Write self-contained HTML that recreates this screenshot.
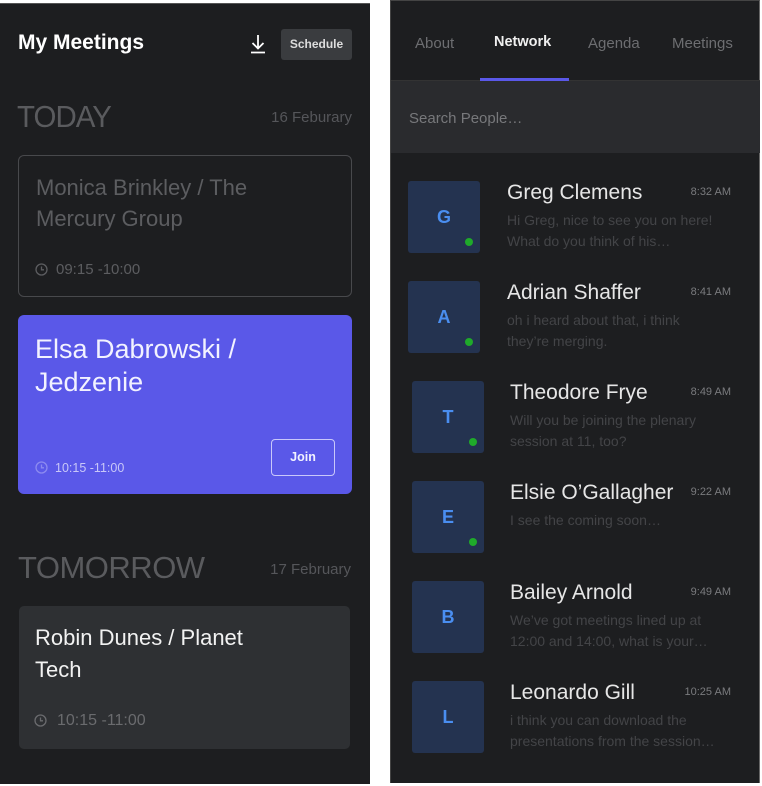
<!DOCTYPE html><html><head><style>
*{margin:0;padding:0;box-sizing:border-box}
body{width:762px;height:786px;background:#fff;font-family:"Liberation Sans",sans-serif;position:relative;overflow:hidden}
.p{position:absolute;background:#1d1e20}
.a{position:absolute;white-space:nowrap}
.av{position:absolute;width:72px;height:72px;background:#243350;border-radius:3px;color:#4a8ef0;font-size:18px;font-weight:bold;text-align:center;line-height:72px}
.dot{position:absolute;width:8px;height:8px;border-radius:50%;background:#1faa2a;right:7px;bottom:7px}
.nm{position:absolute;font-size:21px;color:#e6e6e6;white-space:nowrap}
.tm{position:absolute;font-size:11px;color:#7a7b7e;right:31px;white-space:nowrap}
.ms{position:absolute;font-size:14px;color:#434447;line-height:21px;white-space:nowrap}
</style></head><body>
<div class="p" style="left:0;top:3px;width:370px;height:781px;border-top:1px solid #555">
</div>
<div class="a" style="left:18px;top:31px;font-size:21px;font-weight:bold;color:#fff">My Meetings</div>
<svg class="a" style="left:249px;top:34px" width="18" height="20" viewBox="0 0 18 20"><path d="M9 1v13M3.5 9l5.5 5.5 5.5-5.5M2 18.5h14" stroke="#fff" stroke-width="1.8" fill="none"/></svg>
<div class="a" style="left:281px;top:29px;width:71px;height:31px;background:#3a3c3f;border-radius:3px;color:#ddd;font-size:12px;font-weight:bold;text-align:center;line-height:31px">Schedule</div>
<div class="a" style="left:17px;top:99px;font-size:31px;color:#5a5b5e;letter-spacing:-1px;transform:scaleX(.95);transform-origin:left">TODAY</div>
<div class="a" style="right:410px;top:109px;font-size:15px;color:#55565a">16 Feburary</div>
<div class="a" style="left:18px;top:155px;width:334px;height:142px;border:1.5px solid #48494c;border-radius:6px"></div>
<div class="a" style="left:36px;top:172px;font-size:22px;color:#5c5d60;line-height:31px">Monica Brinkley / The<br>Mercury Group</div>
<svg class="a" style="left:35px;top:263px" width="13" height="13"><circle cx="6.5" cy="6.5" r="5.5" stroke="#5c5d60" stroke-width="1.3" fill="none"/><path d="M6.5 3.5v3.3h2.5" stroke="#5c5d60" stroke-width="1.3" fill="none"/></svg>
<div class="a" style="left:56px;top:261px;font-size:15px;color:#5c5d60">09:15 -10:00</div>
<div class="a" style="left:18px;top:315px;width:334px;height:179px;background:#5a58e8;border-radius:6px"></div>
<div class="a" style="left:35px;top:333px;font-size:27px;color:#f2f2ff;line-height:33px">Elsa Dabrowski /<br>Jedzenie</div>
<svg class="a" style="left:35px;top:461px" width="13" height="13"><circle cx="6.5" cy="6.5" r="5.5" stroke="#8c8af0" stroke-width="1.3" fill="none"/><path d="M6.5 3.5v3.3h2.5" stroke="#8c8af0" stroke-width="1.3" fill="none"/></svg>
<div class="a" style="left:55px;top:461px;font-size:12.5px;color:#c8c7f8">10:15 -11:00</div>
<div class="a" style="left:271px;top:439px;width:64px;height:37px;border:1.5px solid #c9c8fa;border-radius:4px;color:#f2f2ff;font-size:12.5px;font-weight:bold;text-align:center;line-height:34px">Join</div>
<div class="a" style="left:18px;top:550px;font-size:31px;color:#5a5b5e;letter-spacing:-0.5px">TOMORROW</div>
<div class="a" style="right:411px;top:561px;font-size:15px;color:#55565a">17 February</div>
<div class="a" style="left:19px;top:606px;width:331px;height:143px;background:#2e3033;border-radius:5px"></div>
<div class="a" style="left:35px;top:622px;font-size:22px;color:#f2f2f2;line-height:32px">Robin Dunes / Planet<br>Tech</div>
<svg class="a" style="left:34px;top:714px" width="13" height="13"><circle cx="6.5" cy="6.5" r="5.5" stroke="#6a6b6e" stroke-width="1.3" fill="none"/><path d="M6.5 3.5v3.3h2.5" stroke="#6a6b6e" stroke-width="1.3" fill="none"/></svg>
<div class="a" style="left:57px;top:712px;font-size:16px;color:#6a6b6e">10:15 -11:00</div>

<div class="p" style="left:390px;top:0;width:370px;height:783px;border-left:1px solid #444;border-top:1px solid #444;border-right:1px solid #666"></div>
<div class="a" style="left:391px;top:80px;width:369px;height:73px;background:#2a2b2e;border-top:1px solid #333"></div>
<div class="a" style="left:480px;top:78px;width:89px;height:3px;background:#5a58e8"></div>
<div class="a" style="left:415px;top:35px;font-size:15px;color:#6d6e71">About</div>
<div class="a" style="left:494px;top:34px;font-size:14.5px;color:#f0f0f0;font-weight:bold">Network</div>
<div class="a" style="left:588px;top:35px;font-size:15px;color:#6d6e71">Agenda</div>
<div class="a" style="left:672px;top:35px;font-size:15px;color:#6d6e71">Meetings</div>
<div class="a" style="left:409px;top:110px;font-size:15px;color:#77787b">Search People…</div>

<div class="av" style="left:408px;top:181px">G<div class="dot"></div></div>
<div class="nm" style="left:507px;top:181px">Greg Clemens</div><div class="tm" style="top:186px">8:32 AM</div>
<div class="ms" style="left:507px;top:210px">Hi Greg, nice to see you on here!<br>What do you think of his…</div>

<div class="av" style="left:408px;top:281px">A<div class="dot"></div></div>
<div class="nm" style="left:507px;top:281px">Adrian Shaffer</div><div class="tm" style="top:286px">8:41 AM</div>
<div class="ms" style="left:507px;top:310px">oh i heard about that, i think<br>they’re merging.</div>

<div class="av" style="left:412px;top:381px">T<div class="dot"></div></div>
<div class="nm" style="left:510px;top:381px">Theodore Frye</div><div class="tm" style="top:386px">8:49 AM</div>
<div class="ms" style="left:510px;top:410px">Will you be joining the plenary<br>session at 11, too?</div>

<div class="av" style="left:412px;top:481px">E<div class="dot"></div></div>
<div class="nm" style="left:510px;top:481px">Elsie O’Gallagher</div><div class="tm" style="top:486px">9:22 AM</div>
<div class="ms" style="left:510px;top:510px">I see the coming soon…</div>

<div class="av" style="left:412px;top:581px">B</div>
<div class="nm" style="left:510px;top:581px">Bailey Arnold</div><div class="tm" style="top:586px">9:49 AM</div>
<div class="ms" style="left:510px;top:610px">We’ve got meetings lined up at<br>12:00 and 14:00, what is your…</div>

<div class="av" style="left:412px;top:681px">L</div>
<div class="nm" style="left:510px;top:681px">Leonardo Gill</div><div class="tm" style="top:686px">10:25 AM</div>
<div class="ms" style="left:510px;top:710px">i think you can download the<br>presentations from the session…</div>
</body></html>
